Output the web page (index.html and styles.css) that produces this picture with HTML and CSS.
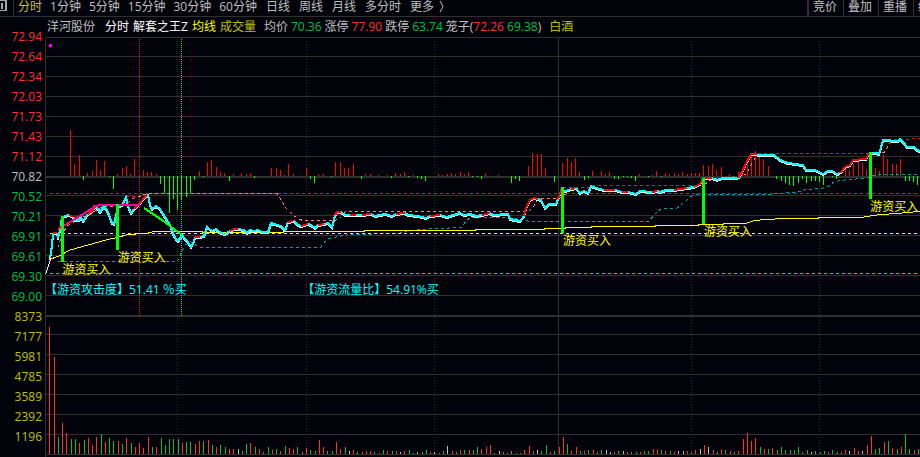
FILE: index.html
```html
<!DOCTYPE html>
<html lang="zh-CN">
<head>
<meta charset="utf-8">
<title>洋河股份 分时</title>
<link rel="stylesheet" href="styles.css">
</head>
<body>
<header class="toolbar">
  <button class="panel-toggle" aria-label="面板"><svg width="7" height="12" viewBox="0 0 7 12" shape-rendering="crispEdges"><path d="M0 0H7V11H0V10H5V1H0ZM1 3H3V9H1Z" fill="#a8a8a8"/></svg></button>
  <nav class="periods">
    <div class="minutes"><button class="active">分时</button><button>1分钟</button><button>5分钟</button><button>15分钟</button><button>30分钟</button><button>60分钟</button></div>
    <button>日线</button><button>周线</button><button>月线</button><button>多分时</button><button class="more">更多<svg width="5" height="13" viewBox="0 0 5 13"><path d="M1 1L4 6.500L1 12" fill="none" stroke="currentColor"/></svg></button>
  </nav>
  <div class="actions"><button>竞价</button><button>叠加</button><button>重播</button><button>统计</button></div>
</header>
<main class="board">
  <div class="axis">
    <span class="up">72.94</span><span class="up">72.64</span><span class="up">72.34</span><span class="up">72.03</span><span class="up">71.73</span><span class="up">71.43</span><span class="up">71.12</span><span>70.82</span><span class="down">70.52</span><span class="down">70.21</span><span class="down">69.91</span><span class="down">69.61</span><span class="down">69.30</span><span class="down">69.00</span><span class="vol">8373</span><span class="vol">7177</span><span class="vol">5981</span><span class="vol">4785</span><span class="vol">3589</span><span class="vol">2392</span><span class="vol">1196</span>
  </div>
  <div class="legend">
    <span class="name">洋河股份</span>
    <span class="group"><b>分时</b><b>解套之王Z</b><b class="avg">均线</b><span class="vol">成交量</span></span>
    <span class="quotes"><span>均价</span><span class="down">70.36</span><span>涨停</span><span class="up">77.90</span><span>跌停</span><span class="down">63.74</span><span>笼子(<span class="up">72.26</span> <span class="down">69.38</span>)</span></span>
    <span class="sector">白酒</span>
  </div>
  <div class="plot">
    <svg viewBox="45 37 875 420" preserveAspectRatio="none" shape-rendering="crispEdges" fill="none">
      <g transform="translate(.5 .5)">
        <path class="grid" d="M45 37H920M45 56H920M45 76H920M45 96H920M45 116H920M45 136H920M45 156H920M45 176H920M45 177H920M45 195H920M45 215H920M45 235H920M45 255H920M45 275H920M45 295H920M45 315H920M45 316H920M45 334H920M45 354H920M45 374H920M45 394H920M45 414H920M45 434H920M45 454H920M45 37V457M558 37V454"/>
        <path class="grid dots" d="M177 40V454M306 40V454M434 40V454M691 40V454M819 40V454"/>
      </g>
      <g id="bars" transform="translate(.5 0)"></g>
      <g transform="translate(.5 .5)">
        <path class="cursor-red" d="M139 38V316"/>
        <path class="cursor-green" d="M181 38V316"/>
        <path class="dash red" d="M49 193H920"/>
        <path class="dash red" d="M62 216H75M92 205H120M125 196H143M562 187H590L592 185H696M757 153H874M882 140L898 139L920 138"/>
        <path class="dash teal" d="M57 261H177L180 254L184 245L190 241L197 246L200 247H320L326 239L337 236L350 234L398 233L403 231L418 229L437 228L461 227L466 220L470 217H510L530 221H648L655 213L661 208H676L692 195L697 194H764L777 193L800 191L805 189L821 188L828 186L834 181L848 179L863 178L877 174H920"/>
        <path class="dash yellow" d="M49 233H920"/>
        <path class="dash green" d="M49 273H920"/>
        <path class="dash pink" d="M58 247L60 238L66 226L80 217L88 215L100 207L125 204L134 197L148 193H277L281 200L286 208L293 215L299 219L303 220H335L341 216L345 211H528L534 205L538 198H558L566 193L570 188M704 184L712 178L740 177L746 173L753 160L757 154M876 153L884 152L889 143L892 140"/>
        <path class="yellow" d="M49 259L60 255L68 250L82 246L93 243L107 239L117 237L127 234L145 233L154 231H202V232H283V231H364V230H475V229H544V228H565V227H591V226H655V225H698V224H723V223H745L754 220L766 219L783 218H818V217H860L880 214L897 213L906 212L920 211"/>
        <path class="white" d="M45 274L50 259"/>
      </g>
      <g id="price"></g>
      <g class="signal">
        <path class="magenta" d="M58 229L65 225L80 216L96 206L101 205H140"/>
        <path class="green" d="M144 208L162 220L182 235"/>
        <path class="marker" d="M62.500 216V262M117.500 204V250M562.500 187V233M703.500 178V224M870.500 152V199"/>
        <path class="magenta-fill" d="M49 44H52V47H49Z"/>
      </g>
    </svg>
    <span class="buy b1">游资买入</span><span class="buy b2">游资买入</span><span class="buy b3">游资买入</span><span class="buy b4">游资买入</span><span class="buy b5">游资买入</span>
    <span class="metric m1">【游资攻击度】51.41 ％买</span>
    <span class="metric m2">【游资流量比】54.91%买</span>
  </div>
</main>
<script src="chart.js"></script>
</body>
</html>
```
FILE: styles.css
```css
* { box-sizing: border-box; }
body {
  margin: 0;
  background: #02020a;
  color: #c0c0c0;
  font: 12px/20px "Open Sans", "Noto Sans CJK SC", sans-serif;
  overflow: hidden;
}
button {
  font: inherit;
  color: inherit;
  background: none;
  border: 0;
  padding: 0;
  white-space: nowrap;
}
.toolbar {
  display: flex;
  height: 17px;
  line-height: 14px;
  border-bottom: 1px solid #303030;
}
.toolbar button { display: flex; align-items: flex-start; }
.toolbar .panel-toggle { flex: none; width: 14px; border-right: 1px solid #303030; }
.periods { display: flex; flex: 1; gap: 9px; padding-left: 4px; }
.minutes { display: flex; gap: 8px; }
.periods .active { color: #c8c800; }
.periods .more { gap: 5px; }
.actions { display: flex; width: 113px; border-left: 1px solid #303030; overflow: hidden; }
.actions button { flex: none; width: 35px; padding-left: 4px; border-left: 1px solid #303030; }
.board {
  display: grid;
  grid-template-columns: 45px 1fr;
  grid-template-rows: 20px 420px;
}
.axis {
  grid-row: 1 / 3;
  display: flex;
  flex-direction: column;
  justify-content: space-between;
  height: 429px;
  padding: 10px 3px 0 0;
  text-align: right;
}
.legend {
  display: flex;
  gap: 8px;
  padding-left: 2px;
  white-space: nowrap;
}
.group { display: flex; gap: 4px; padding-left: 2px; }
.group b { font-weight: 400; color: #fff; }
.group .avg { color: #ff0; }
.quotes { display: flex; gap: 3px; }
.up { color: #ff3030; }
.down { color: #00c040; }
.vol, .sector { color: #c0c000; }
.plot { position: relative; }
.plot svg { display: block; width: 100%; height: 100%; }
.grid { stroke: #303030; }
.dots { stroke-dasharray: 1 2; }
.cursor-red { stroke: #e02020; stroke-dasharray: 1 1; }
.cursor-green { stroke: #00ff00; stroke-dasharray: 1 1; }
.dash { stroke-dasharray: 3 3; }
.red { stroke: #e81010; }
.teal { stroke: #00a0a0; }
.yellow { stroke: #ff0; }
.pink { stroke: #ff8080; }
.green { stroke: #0f0; }
.white { stroke: #fff; }
.attack { stroke: #f00; }
.vol-up { stroke: #ff3030; }
.vol-down { stroke: #00c040; }
.vol-flat { stroke: #c0c0c0; }
#price path { stroke-width: 2; }
.cyan { stroke: #0ff; }
.signal path { stroke-width: 2; }
.magenta { stroke: #ff0090; }
.magenta-fill { fill: #f0f; }
.signal .marker { stroke: #0f0; stroke-width: 3; }
.buy, .metric { position: absolute; line-height: 20px; white-space: nowrap; }
.buy { color: #ff0; }
.metric { color: #0ff; top: 243px; }
.b1 { left: 2%; top: 223px; }
.b2 { left: 8.3%; top: 211px; }
.b3 { left: 59.2%; top: 194px; }
.b4 { left: 75.3%; top: 185px; }
.b5 { left: 94.3%; top: 160px; }
.m1 { left: 0; }
.m2 { left: 29.4%; }
```
FILE: chart.js
```js
const NS = "http://www.w3.org/2000/svg";

function addPath(parent, cls, d) {
  const path = document.createElementNS(NS, "path");
  path.setAttribute("class", cls);
  path.setAttribute("d", d);
  document.getElementById(parent).append(path);
}

// Each entry is "x y": a bar from the baseline to y.
function bars(cls, base, list) {
  addPath("bars", cls, list.split(",").map(s => {
    const [x, y] = s.trim().split(" ");
    return `M${x} ${base}V${y}`;
  }).join(""));
}

bars("attack", 176, "70 130,74 164,79 155,87 173,92 171,96 160,100 170,104 161,117 174,122 168,126 166,130 174,134 159,143 170,147 172,151 172,156 174,199 171,207 162,211 160,216 167,220 172,224 173,233 174,241 173,246 174,250 173,271 168,276 168,280 170,284 175,288 164,293 174,306 168,318 174,323 174,335 162,340 162,344 168,348 168,353 164,365 174,370 174,378 175,387 175,395 173,400 174,404 172,413 175,438 174,442 175,447 174,451 173,455 174,460 172,464 174,468 172,485 173,498 175,528 166,532 153,537 154,541 154,545 168,562 163,567 158,571 162,575 158,579 172,592 171,601 171,605 174,609 172,639 174,652 175,656 171,665 173,669 174,674 173,678 174,682 172,687 174,691 173,695 173,699 173,703 165,708 166,712 164,716 170,721 167,729 174,738 172,742 170,747 160,751 155,755 151,759 155,763 159,768 166,845 168,849 170,853 164,858 160,862 163,866 169,870 162,875 168,879 171,883 155,887 159,892 164,896 164,900 159");
bars("green", 176, "83 180,109 177,113 189,160 184,164 194,169 213,173 199,177 210,181 200,186 197,190 194,194 180,203 177,229 181,254 178,310 179,314 183,331 177,361 179,391 178,408 177,417 178,421 179,425 181,472 177,477 177,481 179,511 183,515 179,519 181,554 182,584 180,588 178,614 179,618 179,623 177,627 177,631 178,635 181,648 177,661 177,733 177,776 179,781 181,785 183,789 185,793 186,798 183,802 179,806 183,811 181,815 181,819 182,823 185,832 177,836 179,905 181,909 181,913 182,917 185");

bars("vol-up", 454, "49 327,54 357,62 423,66 433,79 443,88 438,92 445,96 437,105 442,118 441,126 438,135 447,139 443,143 448,148 437,156 447,182 443,195 444,199 441,208 440,216 447,229 449,233 449,250 443,259 449,272 450,280 451,289 448,293 449,302 452,306 448,319 440,323 447,336 442,340 449,353 450,362 452,366 451,370 451,379 453,387 451,396 451,404 451,430 452,439 453,452 451,460 450,469 450,481 449,486 447,490 445,507 453,516 453,524 450,529 446,533 451,550 452,559 447,563 437,571 451,576 447,584 451,593 450,614 452,627 452,640 452,653 449,657 449,665 451,674 452,687 451,695 450,704 445,713 450,721 449,730 451,738 451,743 439,747 433,751 441,755 438,764 449,772 448,802 452,828 452,841 452,845 450,854 448,858 451,867 445,871 436,884 442,892 448,901 447,914 450");
bars("vol-down", 454, "58 437,71 439,75 439,84 440,101 434,109 438,113 441,122 444,131 443,152 447,161 438,165 445,169 439,173 439,178 439,186 442,190 442,203 441,212 445,220 445,225 447,242 451,246 444,255 447,263 452,268 447,276 449,285 446,297 447,310 450,315 451,327 451,332 451,345 447,357 452,374 452,383 450,392 451,409 450,413 453,422 452,426 450,443 451,456 452,464 450,473 450,477 447,494 453,503 452,511 451,520 453,541 451,546 445,554 451,567 444,580 451,588 450,597 452,601 450,618 451,631 452,636 452,644 451,648 451,661 450,670 451,691 452,717 452,725 450,734 452,760 447,768 449,777 450,781 447,785 450,790 450,794 450,798 447,807 450,815 451,820 452,824 451,832 450,837 452,875 449,879 448,888 441,897 449,905 434,909 449,918 449");
bars("vol-flat", 454, "238 449,349 451,400 452,417 452,434 452,447 446,499 451,537 450,606 450,610 452,623 451,678 451,683 451,700 449,708 447,811 452,849 451,862 451");

// Price line; segments starting with "r" are the rising, red ones.
const segments = [
  "50 258 52 245 53 233", "r53 233 57 233", "57 233 58 237 60 230 62 217 69 215", "r69 215 73 217",
  "73 217 75 220 79 220 81 217 83 221 88 214", "r88 214 92 211 96 206",
  "96 206 100 212 104 206 108 212 112 223 114 224 118 207 122 205 126 197 128 206 131 213 134 209",
  "r134 209 140 203 144 198 148 194",
  "148 194 150 205 152 209 156 206 160 209 163 214 167 220 171 227 174 236 178 241 182 235 185 239 188 242 191 247 194 241 195 237",
  "r195 237 200 237", "200 237 204 236 207 227 212 231 216 229 221 233 225 234 230 231", "r230 231 234 229 238 229",
  "238 229 244 230 247 233 250 230 254 231 258 230 262 232 268 232 271 223 274 224 281 226 285 230 288 222",
  "r288 222 294 221", "294 221 298 225 301 226", "r301 226 308 224", "308 224 311 225 315 228 318 225", "r318 225 324 224",
  "324 224 328 223 332 227 335 215", "r335 215 337 212 341 212", "341 212 345 215 350 215", "r350 215 356 215",
  "356 215 362 215", "r362 215 371 214", "371 214 375 216 385 214 392 216 396 214", "r396 214 405 213",
  "405 213 408 215 418 216 426 218 430 216", "r430 216 440 215", "440 215 447 217 450 216 460 213 464 215 470 214 476 216 482 215",
  "r482 215 490 213", "490 213 493 215 508 214 510 219 520 221 524 216", "r524 216 526 208 530 200 534 198 538 199",
  "538 199 541 200 545 208 549 204 556 204 558 199", "r558 199 562 188", "562 190 566 191 571 189", "r571 189 576 188",
  "576 188 580 193 584 191 588 193 591 186 596 188 604 190", "r604 190 615 190", "615 190 622 192", "r622 192 628 192",
  "628 192 636 194 640 191 652 192", "r652 192 657 191", "657 191 660 192 666 190 674 190", "r674 190 687 188",
  "687 188 694 187", "r694 187 700 184 703 178 712 178", "712 178 717 180 722 178 738 178",
  "r738 178 742 172 746 163 751 154 757 154", "757 155 774 155 780 160 788 163 803 165 806 170 815 170 823 174 828 171 832 171 837 174 840 173",
  "r840 173 845 167 850 165 853 160 866 159 869 153", "869 153 876 153 879 154 881 147 883 140 898 141 900 139 904 143 907 147 914 147 917 150 920 151"
];
const strip = s => s.replace("r", "");
segments.forEach(s => addPath("price", "white", "M" + strip(s).split(" ").map((v, i) => i % 2 ? +v + 1 : v).join(" ")));
segments.forEach(s => addPath("price", s[0] === "r" ? "attack" : "cyan", "M" + strip(s)));
```
